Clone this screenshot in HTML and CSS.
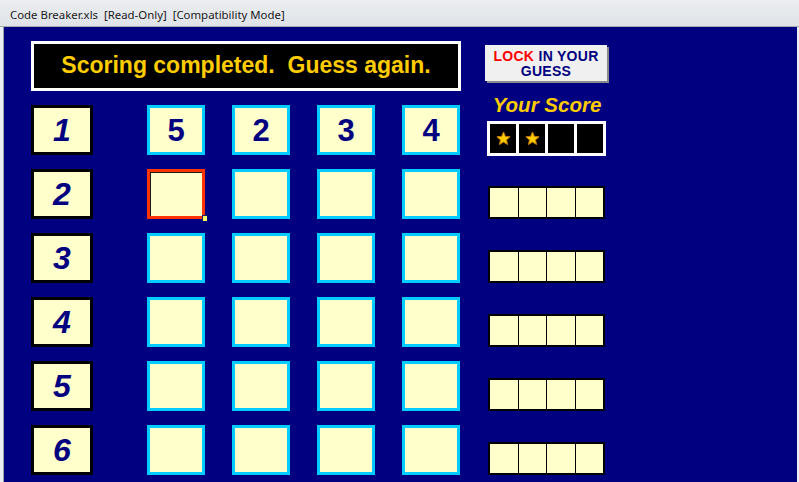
FILE: index.html
```html
<!DOCTYPE html>
<html>
<head>
<meta charset="utf-8">
<title>Code Breaker</title>
<link rel="stylesheet" href="styles.css">
</head>
<body>
<div class="titlebar"><span>Code Breaker.xls&nbsp; [Read-Only]&nbsp; [Compatibility Mode]</span></div>
<div class="window">
  <div class="sheet">
    <div class="board">
      <div class="message">Scoring completed.&nbsp; Guess again.</div>

      <div class="label">1</div>
      <div class="guess">5</div><div class="guess">2</div><div class="guess">3</div><div class="guess">4</div>

      <div class="label">2</div>
      <div class="guess selected"><span class="handle"></span></div><div class="guess"></div><div class="guess"></div><div class="guess"></div>

      <div class="label">3</div>
      <div class="guess"></div><div class="guess"></div><div class="guess"></div><div class="guess"></div>

      <div class="label">4</div>
      <div class="guess"></div><div class="guess"></div><div class="guess"></div><div class="guess"></div>

      <div class="label">5</div>
      <div class="guess"></div><div class="guess"></div><div class="guess"></div><div class="guess"></div>

      <div class="label">6</div>
      <div class="guess"></div><div class="guess"></div><div class="guess"></div><div class="guess"></div>
    </div>

    <div class="side">
      <div class="lock"><span class="red">LOCK</span> IN YOUR<br>GUESS</div>
      <div class="your-score">Your Score</div>
      <div class="stars">
        <div class="star-cell"><svg viewBox="0 0 24 24" width="15" height="15"><polygon points="12,1.5 15,8.6 22.6,9.2 16.8,14.2 18.6,21.7 12,17.7 5.4,21.7 7.2,14.2 1.4,9.2 9,8.6" fill="#ffcc00" stroke="#c07a00" stroke-width="1.6" stroke-linejoin="round"/></svg></div>
        <div class="star-cell"><svg viewBox="0 0 24 24" width="15" height="15"><polygon points="12,1.5 15,8.6 22.6,9.2 16.8,14.2 18.6,21.7 12,17.7 5.4,21.7 7.2,14.2 1.4,9.2 9,8.6" fill="#ffcc00" stroke="#c07a00" stroke-width="1.6" stroke-linejoin="round"/></svg></div>
        <div class="star-cell"></div>
        <div class="star-cell"></div>
      </div>
      <div class="score first"><i></i><i></i><i></i><i></i></div>
      <div class="score"><i></i><i></i><i></i><i></i></div>
      <div class="score"><i></i><i></i><i></i><i></i></div>
      <div class="score"><i></i><i></i><i></i><i></i></div>
      <div class="score"><i></i><i></i><i></i><i></i></div>
    </div>
  </div>
</div>
</body>
</html>
```

FILE: styles.css
```css
* { box-sizing: border-box; }
html, body { margin: 0; padding: 0; }
body {
  width: 799px;
  height: 482px;
  overflow: hidden;
  background: #e9ebee;
  font-family: "Liberation Sans", Arial, sans-serif;
}
.titlebar {
  height: 27px;
  padding: 4px 0 0 10px;
  line-height: 22px;
  font-family: "Noto Sans", "Open Sans", sans-serif;
  font-size: 11.4px;
  color: #1a1a1a;
  background: linear-gradient(#eceef1, #dfe2e6);
  border-bottom: 1px solid #a3a9b1;
  white-space: nowrap;
}
.window {
  display: flex;
  height: 455px;
  padding-left: 3px;
  padding-right: 2px;
  background: #eceef1;
}
.sheet {
  flex: 1;
  display: flex;
  align-items: flex-start;
  background: #000080;
  border-left: 1px solid #9ba1a9;
  padding: 14px 0 0 27px;
}
.board {
  display: grid;
  grid-template-columns: 89px repeat(4, 58px);
  grid-auto-rows: 50px;
  column-gap: 27px;
  row-gap: 14px;
}
.message {
  grid-column: 1 / -1;
  width: 430px;
  background: #000;
  border: 3px solid #fff;
  color: #ffcc00;
  font-weight: bold;
  font-size: 23px;
  display: flex;
  align-items: center;
  justify-content: center;
  padding-bottom: 1px;
}
.label {
  width: 62px;
  background: #ffffcc;
  border: 3px solid #000;
  color: #000080;
  font-weight: bold;
  font-style: italic;
  font-size: 32px;
  display: flex;
  align-items: center;
  justify-content: center;
}
.guess {
  position: relative;
  background: #ffffcc;
  border: 3px solid #00ccff;
  color: #000080;
  font-weight: bold;
  font-size: 31px;
  display: flex;
  align-items: center;
  justify-content: center;
  padding-top: 2px;
}
.guess.selected {
  border-color: #ff3300;
  box-shadow: inset 1px 1px 0 #1a1a1a;
}
.handle {
  position: absolute;
  right: -5px;
  bottom: -5px;
  width: 5px;
  height: 6px;
  background: #ffff66;
  border-top: 1px solid #1a1a6a;
  border-left: 1px solid #1a1a6a;
}
.side {
  margin-left: 25px;
  width: 124px;
  display: flex;
  flex-direction: column;
  align-items: flex-start;
}
.lock {
  margin-top: 4px;
  width: 122px;
  height: 36px;
  background: #f0f0f0;
  box-shadow: 2px 2px 0 #8a8a8a;
  color: #000080;
  font-weight: bold;
  font-size: 14px;
  line-height: 15px;
  text-align: center;
  padding-top: 4px;
  letter-spacing: 0.3px;
}
.red { color: #ff0000; }
.your-score {
  width: 124px;
  margin-top: 13px;
  height: 22px;
  margin-bottom: 5px;
  line-height: 22px;
  text-align: center;
  color: #ffcc00;
  font-weight: bold;
  font-style: italic;
  font-size: 20.5px;
}
.stars {
  margin-left: 2px;
  display: grid;
  grid-template-columns: repeat(4, 26px);
  grid-auto-rows: 29px;
  gap: 3px;
  padding: 3px;
  background: #fff;
}
.star-cell {
  background: #000;
  display: flex;
  align-items: center;
  justify-content: center;
}
.score {
  margin-left: 3px;
  margin-top: 31px;
  width: 117px;
  height: 33px;
  display: grid;
  grid-template-columns: repeat(4, 1fr);
  gap: 1px;
  background: #000;
  border: 2px solid #000;
}
.score.first { margin-top: 30px; }
.score i { background: #ffffcc; }
```
